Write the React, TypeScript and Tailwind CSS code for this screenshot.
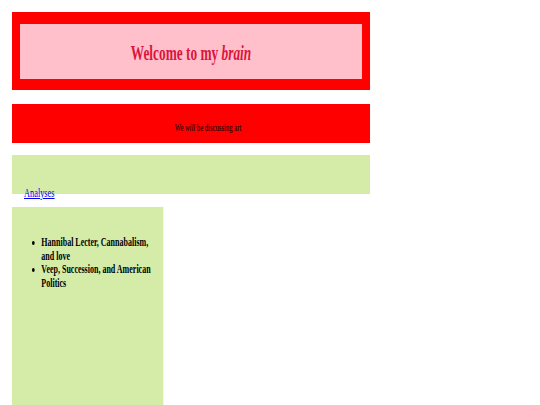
import React from "react";

const analyses = [
  "Hannibal Lecter, Cannabalism, and love",
  "Veep, Succession, and American Politics",
];

export default function App() {
  return (
    <div className="h-[405px] w-full overflow-hidden bg-white">
      {/* page is laid out wide, then squeezed horizontally like the reference */}
      <div
        className="w-[810px] origin-top-left scale-x-[0.6667] pt-[12px] text-black"
        style={{ fontFamily: '"Liberation Serif", "Times New Roman", serif' }}
      >
        <header className="ml-[18px] w-[537px] bg-[#ff0000] px-[12px] pt-[12px] pb-[11px]">
          <div className="flex h-[55px] items-center justify-center bg-[#ffc0cb] pt-[3px]">
            <h1 className="text-[20px] leading-none font-bold text-[#dc143c]">
              Welcome to my <em>brain</em>
            </h1>
          </div>
        </header>

        <div className="mt-[14px] ml-[18px] h-[39px] w-[537px] bg-[#ff0000] pt-[18px] pl-[51px] text-center">
          <p className="text-[10px] leading-[11.5px]">
            We <em>will</em> be discussing art
          </p>
        </div>

        <nav className="mt-[12px] ml-[18px] h-[39px] w-[537px] bg-[#d5eca9] pt-[25px] pl-[18px]">
          <a
            href="#"
            className="text-[12.5px] leading-none text-[#0000ee] underline"
          >
            Analyses
          </a>
        </nav>

        <aside className="mt-[13px] ml-[18px] h-[200px] w-[227px] bg-[#d5eca9] px-[4px] pt-[29px]">
          <ul className="list-disc pl-[40px] text-[12px] leading-[13.5px] font-bold">
            {analyses.map((a) => (
              <li key={a}>{a}</li>
            ))}
          </ul>
        </aside>
      </div>
    </div>
  );
}
